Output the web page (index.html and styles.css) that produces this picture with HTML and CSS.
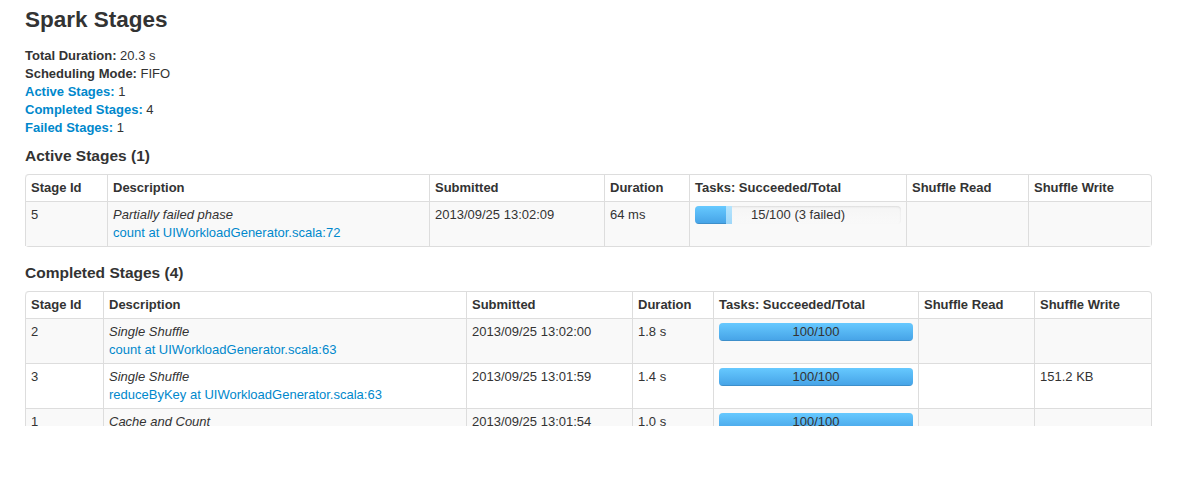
FILE: index.html
```html
<!DOCTYPE html>
<html>
<head>
<meta charset="utf-8">
<title>Spark Stages</title>
<link rel="stylesheet" href="styles.css">
</head>
<body>
<div class="page">
  <h3 class="title">Spark Stages</h3>
  <ul class="summary">
    <li><strong>Total Duration:</strong> 20.3 s</li>
    <li><strong>Scheduling Mode:</strong> FIFO</li>
    <li><a href="#active"><strong>Active Stages:</strong></a> 1</li>
    <li><a href="#completed"><strong>Completed Stages:</strong></a> 4</li>
    <li><a href="#failed"><strong>Failed Stages:</strong></a> 1</li>
  </ul>

  <h4 class="section" id="active">Active Stages (1)</h4>
  <table class="stages">
    <colgroup>
      <col class="a1"><col class="a2"><col class="a3"><col class="a4"><col class="a5"><col class="a6"><col class="a7">
    </colgroup>
    <thead>
      <tr><th>Stage Id</th><th>Description</th><th>Submitted</th><th>Duration</th><th>Tasks: Succeeded/Total</th><th>Shuffle Read</th><th>Shuffle Write</th></tr>
    </thead>
    <tbody>
      <tr>
        <td>5</td>
        <td><em class="desc">Partially failed phase</em><a href="#" class="site">count at UIWorkloadGenerator.scala:72</a></td>
        <td>2013/09/25 13:02:09</td>
        <td>64 ms</td>
        <td class="tasks"><div class="progress"><div class="fills"><span class="bar done" style="width:15%"></span><span class="bar running" style="width:3%"></span></div><span class="label">15/100 (3 failed)</span></div></td>
        <td></td>
        <td></td>
      </tr>
    </tbody>
  </table>

  <h4 class="section" id="completed">Completed Stages (4)</h4>
  <table class="stages">
    <colgroup>
      <col class="c1"><col class="c2"><col class="c3"><col class="c4"><col class="c5"><col class="c6"><col class="c7">
    </colgroup>
    <thead>
      <tr><th>Stage Id</th><th>Description</th><th>Submitted</th><th>Duration</th><th>Tasks: Succeeded/Total</th><th>Shuffle Read</th><th>Shuffle Write</th></tr>
    </thead>
    <tbody>
      <tr>
        <td>2</td>
        <td><em class="desc">Single Shuffle</em><a href="#" class="site">count at UIWorkloadGenerator.scala:63</a></td>
        <td>2013/09/25 13:02:00</td>
        <td>1.8 s</td>
        <td class="tasks"><div class="progress"><div class="fills"><span class="bar done" style="width:100%"></span></div><span class="label">100/100</span></div></td>
        <td></td>
        <td></td>
      </tr>
      <tr>
        <td>3</td>
        <td><em class="desc">Single Shuffle</em><a href="#" class="site">reduceByKey at UIWorkloadGenerator.scala:63</a></td>
        <td>2013/09/25 13:01:59</td>
        <td>1.4 s</td>
        <td class="tasks"><div class="progress"><div class="fills"><span class="bar done" style="width:100%"></span></div><span class="label">100/100</span></div></td>
        <td></td>
        <td>151.2 KB</td>
      </tr>
      <tr>
        <td>1</td>
        <td><em class="desc">Cache and Count</em></td>
        <td>2013/09/25 13:01:54</td>
        <td>1.0 s</td>
        <td class="tasks"><div class="progress"><div class="fills"><span class="bar done" style="width:100%"></span></div><span class="label">100/100</span></div></td>
        <td></td>
        <td></td>
      </tr>
    </tbody>
  </table>
</div>
</body>
</html>
```

FILE: styles.css
```css
html, body {
  margin: 0;
  padding: 0;
  background: #fff;
}
body {
  font-family: "Liberation Sans", Arial, Helvetica, sans-serif;
  font-size: 13px;
  line-height: 18px;
  color: #333;
}
.page {
  height: 426px;
  overflow: hidden;
  padding: 7px 40px 0 25px;
  box-sizing: border-box;
}
.title {
  margin: 0;
  font-size: 22.5px;
  line-height: 26px;
  font-weight: bold;
  color: #333;
}
.summary {
  list-style: none;
  margin: 14px 0 0 0;
  padding: 0;
}
.summary li {
  line-height: 18px;
}
a {
  color: #0088cc;
  text-decoration: none;
}
.section {
  margin: 9px 0 8px 0;
  font-size: 15.5px;
  line-height: 20px;
  font-weight: bold;
  color: #333;
}
.stages + .section {
  margin-top: 16px;
}
.stages {
  width: 100%;
  table-layout: fixed;
  border-collapse: separate;
  border-spacing: 0;
  border: 1px solid #ddd;
  border-left: 0;
  border-radius: 4px;
  margin: 0;
}
.stages th,
.stages td {
  padding: 4px 5px;
  line-height: 18px;
  text-align: left;
  vertical-align: top;
  border-left: 1px solid #ddd;
  border-top: 1px solid #ddd;
  overflow: hidden;
  white-space: nowrap;
}
.stages thead tr:first-child th {
  border-top: 0;
}
.stages th {
  font-weight: bold;
  color: #333;
}
.stages thead th:first-child {
  border-top-left-radius: 4px;
}
.stages tbody tr:nth-child(odd) td {
  background: #f9f9f9;
}
.desc {
  display: block;
  font-style: italic;
}
.site {
  display: block;
}

.a1 { width: 82px; }
.a2 { width: 322px; }
.a3 { width: 175px; }
.a4 { width: 85px; }
.a5 { width: 217px; }
.a6 { width: 122px; }
.a7 { width: 123px; }

.c1 { width: 78px; }
.c2 { width: 363px; }
.c3 { width: 166px; }
.c4 { width: 81px; }
.c5 { width: 205px; }
.c6 { width: 116px; }
.c7 { width: 117px; }

.tasks {
  padding-right: 5px;
}
.progress {
  display: grid;
  height: 18px;
  border-radius: 4px;
  background: linear-gradient(to bottom, #f5f5f5, #f9f9f9);
  box-shadow: inset 0 1px 2px rgba(0, 0, 0, 0.1);
  overflow: hidden;
}
.fills,
.label {
  grid-area: 1 / 1;
}
.fills {
  display: flex;
  height: 18px;
}
.bar {
  display: block;
  height: 18px;
}
.bar.done {
  background: linear-gradient(to bottom, #66c9ff, #45a2e6);
  box-shadow: inset 0 -1px 0 rgba(0, 0, 0, 0.12);
}
.bar.running {
  background: linear-gradient(to bottom, #b5e4fd, #9fd7f9);
}
.label {
  text-align: center;
  line-height: 18px;
  color: #333;
}
```
